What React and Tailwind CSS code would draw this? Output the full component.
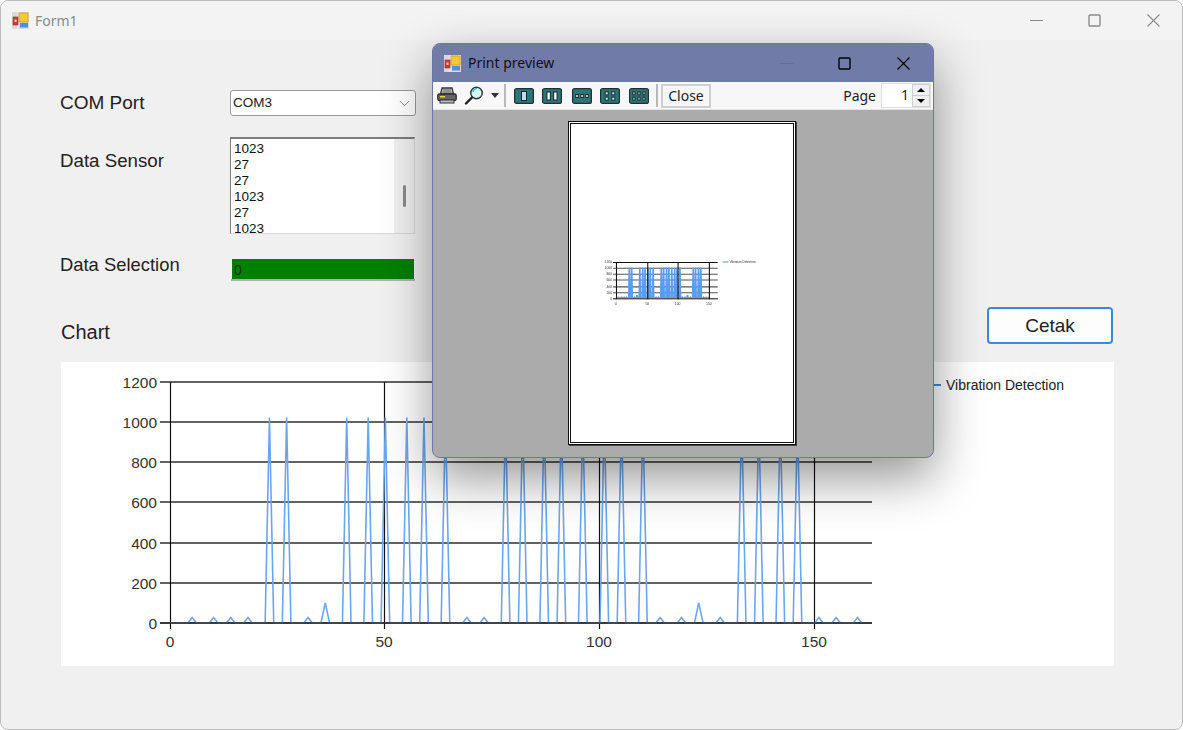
import { ChevronDown } from 'lucide-react';

// spike positions read off the chart
const HIGH = [23, 27, 41, 46, 50, 55, 59, 64, 78, 82, 87, 91, 96, 101, 105, 110, 133, 137, 142, 146];
const LOW = [5, 10, 14, 18, 32, 69, 73, 114, 119, 128, 151, 155, 160];
const MID = [36, 123];

const values = Array.from({ length: 162 }, (_, i) => {
  if (HIGH.includes(i)) return 1023;
  if (LOW.includes(i)) return 27;
  if (MID.includes(i)) return 100;
  return 0;
});

const toPoints = (x0, xStep, y0, yStep) =>
  values.map((v, i) => `${(x0 + i * xStep).toFixed(2)},${(y0 - v * yStep).toFixed(2)}`).join(' ');

function AppIcon({ className }) {
  return (
    <svg viewBox="0 0 17 17" className={className}>
      <rect width="17" height="17" fill="#d9d9d9" />
      <rect x="0" y="5.5" width="17" height="1" fill="#f2f2f2" />
      <rect x="5.5" y="0" width="1" height="17" fill="#f2f2f2" />
      <rect x="7" y="1" width="9" height="9" fill="#f5c838" stroke="#d99a1e" strokeWidth="0.8" />
      <rect x="1" y="5" width="5" height="8" fill="#d8382e" stroke="#9c2a22" strokeWidth="0.6" />
      <rect x="2.5" y="7.5" width="2" height="2.5" fill="#f4d0c8" />
      <rect x="8" y="11" width="8" height="4.5" fill="#4f8fe0" />
    </svg>
  );
}

function CaptionMin({ className }) {
  return (
    <svg viewBox="0 0 13 13" className={`w-[13px] h-[13px] ${className}`}>
      <line x1="0" x2="13" y1="6.5" y2="6.5" stroke="currentColor" strokeWidth="1" />
    </svg>
  );
}

function CaptionMax({ className }) {
  return (
    <svg viewBox="0 0 13 13" className={`w-[13px] h-[13px] ${className}`}>
      <rect x="1" y="1" width="11" height="11" rx="1" fill="none" stroke="currentColor" strokeWidth="1.4" />
    </svg>
  );
}

function CaptionClose({ className }) {
  return (
    <svg viewBox="0 0 13 13" className={`w-[13px] h-[13px] ${className}`}>
      <path d="M0.5 0.5L12.5 12.5M12.5 0.5L0.5 12.5" stroke="currentColor" strokeWidth="1.1" fill="none" />
    </svg>
  );
}

function Printer() {
  return (
    <svg viewBox="0 0 20 17" className="w-5 h-[17px]">
      <path d="M5 1h10l1.5 6h-13z" fill="#cfcfcf" stroke="#333" strokeWidth="1.3" />
      <path d="M6 3h8M5.5 5h9" stroke="#555" strokeWidth="1" />
      <rect x="0.8" y="7" width="18.4" height="6.5" rx="1.5" fill="#666" stroke="#2c2c2c" strokeWidth="1.3" />
      <rect x="3" y="9" width="5" height="1.5" fill="#e8d44a" />
      <rect x="3" y="13" width="14" height="3" fill="#bdbdbd" stroke="#333" strokeWidth="1" />
    </svg>
  );
}

function Magnifier() {
  return (
    <svg viewBox="0 0 20 19" className="w-5 h-[19px]">
      <circle cx="12.5" cy="7" r="5.8" fill="#d4f6fa" stroke="#333" strokeWidth="1.4" />
      <path d="M9 6a4 4 0 0 1 4-3.5" stroke="#35c4d8" strokeWidth="1.6" fill="none" />
      <path d="M8 11.5L2 17.5" stroke="#222" strokeWidth="2.4" strokeLinecap="round" />
    </svg>
  );
}

function PagesIcon({ cols, rows, pageW, pageH, tint = '#f4f4f4' }) {
  const gapX = 20 / (cols + 1);
  const gapY = 16 / (rows + 1);
  const cells = [];
  for (let r = 0; r < rows; r++) {
    for (let c = 0; c < cols; c++) {
      cells.push(
        <rect
          key={`${r}-${c}`}
          x={gapX * (c + 1) - pageW / 2}
          y={gapY * (r + 1) - pageH / 2}
          width={pageW}
          height={pageH}
          fill={tint}
          stroke="#12292a"
          strokeWidth="1"
        />
      );
    }
  }
  return (
    <svg viewBox="0 0 20 16" className="w-5 h-4">
      <rect x="0.6" y="0.6" width="18.8" height="14.8" rx="2" fill="#2f7475" stroke="#1e3031" strokeWidth="1.2" />
      {cells}
    </svg>
  );
}

function FormChart() {
  // viewBox uses screen coordinates so the numbers read like the picture
  const yTicks = [1200, 1000, 800, 600, 400, 200, 0];
  const yPos = [382, 422, 462, 502, 543, 583, 623];
  const xTicks = [0, 50, 100, 150];
  const xPos = [170, 384, 599, 814];
  return (
    <svg viewBox="61 362 1053 304" className="block w-full h-full font-['Liberation_Sans',sans-serif]">
      {yTicks.map((t, i) => (
        <g key={t}>
          <line x1="160" x2="872" y1={yPos[i]} y2={yPos[i]} stroke="#2e2e2e" strokeWidth="1.3" />
          <text x="157" y={yPos[i] + 5.5} textAnchor="end" fontSize="15.5" fill="#333">{t}</text>
        </g>
      ))}
      {xTicks.map((t, i) => (
        <g key={t}>
          <line x1={xPos[i] + 0.5} x2={xPos[i] + 0.5} y1="382" y2="629" stroke="#111" strokeWidth="1.2" />
          <text x={xPos[i]} y="647" textAnchor="middle" fontSize="15.5" fill="#333">{t}</text>
        </g>
      ))}
      <polyline points={toPoints(170.7, 4.293, 623, 0.2008)} fill="none" stroke="#6aa6ee" strokeWidth="1.6" />
      <line x1="160" x2="872" y1="623" y2="623" stroke="#2e2e2e" strokeWidth="1.3" />
      <line x1="925" x2="941" y1="385" y2="385" stroke="#3f86e0" strokeWidth="2" />
      <text x="946" y="390" fontSize="14" fill="#222">Vibration Detection</text>
    </svg>
  );
}

function MiniChart() {
  return (
    <svg viewBox="0 0 227 323" className="block w-full h-full blur-[0.3px] font-['Liberation_Sans',sans-serif]">
      {/* page-local coords: page starts at 569,121 */}
      {[140, 146, 152, 158, 165, 171, 177].map((y, i) => (
        <g key={y}>
          <line x1="43" x2="150" y1={y + 0.5} y2={y + 0.5} stroke={i === 0 ? '#111' : '#555'} strokeWidth="1.1" />
          <text x="42" y={y + 1.5} textAnchor="end" fontSize="3.5" fill="#333">{1200 - i * 200}</text>
        </g>
      ))}
      <polyline points={toPoints(46, 0.594, 177, 0.0306)} fill="none" stroke="#5a9cf0" strokeWidth="1.7" />
      <line x1="43" x2="150" y1="177.5" y2="177.5" stroke="#555" strokeWidth="1.1" />
      {[46, 78, 109, 141].map((x, i) => (
        <g key={x}>
          <line x1={x + 0.5} x2={x + 0.5} y1="140" y2="178" stroke="#111" strokeWidth="1.1" />
          <text x={x} y="184" textAnchor="middle" fontSize="3.5" fill="#333">{i * 50}</text>
        </g>
      ))}
      <line x1="155" x2="161" y1="140" y2="140" stroke="#4a93ec" strokeWidth="1" />
      <text x="162" y="141.2" fontSize="3.2" fill="#333">Vibration Detection</text>
    </svg>
  );
}

function PrintPreview() {
  return (
    <div className="absolute left-[432px] top-[43px] w-[502px] h-[415px] flex flex-col rounded-lg overflow-hidden border border-[#6c77a6] bg-[#ababab] font-['Noto_Sans',sans-serif] shadow-[0_20px_50px_rgba(0,0,0,0.42)]">
      <div className="h-[38px] bg-[#717ba8] flex items-center pl-[11px] shrink-0">
        <AppIcon className="w-[17px] h-[17px]" />
        <span className="ml-[7px] text-sm text-[#111]">Print preview</span>
        <CaptionMin className="ml-auto text-[#636d98]" />
        <CaptionMax className="ml-[45px] text-black" />
        <CaptionClose className="ml-[46px] mr-[23px] text-black" />
      </div>
      <div className="h-[28px] bg-[#f7f7f7] flex items-center pl-[4px] pr-[2px] shrink-0 border-b border-[#e4e4e4]">
        <Printer />
        <span className="ml-[7px]"><Magnifier /></span>
        <span className="ml-[7px] w-0 h-0 border-x-4 border-x-transparent border-t-[5px] border-t-[#333]"></span>
        <span className="ml-[5px] w-0.5 h-[23px] bg-[#b8b8b8]"></span>
        <span className="ml-[8px]"><PagesIcon cols={1} rows={1} pageW={5} pageH={9} tint="#c9d6f2" /></span>
        <span className="ml-[8px]"><PagesIcon cols={2} rows={1} pageW={3.5} pageH={8} /></span>
        <span className="ml-[10px]"><PagesIcon cols={3} rows={1} pageW={2.5} pageH={3} /></span>
        <span className="ml-[8px]"><PagesIcon cols={2} rows={2} pageW={3} pageH={3} /></span>
        <span className="ml-[9px]"><PagesIcon cols={3} rows={2} pageW={2} pageH={3} /></span>
        <span className="ml-[7px] w-0.5 h-[23px] bg-[#b8b8b8]"></span>
        <button className="ml-[3px] w-[50px] h-[24px] border-2 border-[#cfcfcf] bg-[#f7f7f7] text-sm leading-none text-[#222]">Close</button>
        <span className="ml-auto text-sm text-[#222]">Page</span>
        <div className="ml-[5px] w-[50px] h-[25px] flex border border-[#e0e0e0] bg-white">
          <span className="flex-1 text-right pr-[3px] text-sm leading-[22px] text-[#222]">1</span>
          <div className="w-[18px] flex flex-col gap-px bg-[#cfcfcf] p-px">
            <div className="flex-1 bg-[#f0f0f0] flex items-center justify-center">
              <span className="w-0 h-0 border-x-4 border-x-transparent border-b-4 border-b-black"></span>
            </div>
            <div className="flex-1 bg-[#f0f0f0] flex items-center justify-center">
              <span className="w-0 h-0 border-x-4 border-x-transparent border-t-4 border-t-black"></span>
            </div>
          </div>
        </div>
      </div>
      <div className="flex-1 flex justify-center pt-[11px] pr-[3px]">
        <div className="w-[228px] h-[324px] border border-[#111] bg-white p-px shadow-[1px_1px_0_#444]">
          <div className="w-full h-full border border-[#111] bg-white">
            <MiniChart />
          </div>
        </div>
      </div>
    </div>
  );
}

export default function App() {
  const sensorData = ['1023', '27', '27', '1023', '27', '1023'];

  return (
    <div className="relative w-[1183px] h-[730px] overflow-hidden bg-white font-['Liberation_Sans',sans-serif]">
      <div className="h-full flex flex-col rounded-lg border border-[#bcbcbc] bg-[#f0f0f0] overflow-hidden">
        {/* title bar */}
        <div className="h-[39px] bg-[#f3f3f3] flex items-center pl-[11px] shrink-0 font-['Noto_Sans',sans-serif]">
          <AppIcon className="w-[17px] h-[17px]" />
          <span className="ml-[6px] text-sm text-[#8a8a8a]">Form1</span>
          <CaptionMin className="ml-auto text-[#8a8a8a]" />
          <CaptionMax className="ml-[45px] text-[#8a8a8a]" />
          <CaptionClose className="ml-[46px] mr-[22px] text-[#8a8a8a]" />
        </div>

        <div className="pl-[59px] text-[19px] leading-6 text-[#222]">
          <div className="mt-[50px] h-[26px] flex items-center">
            <span className="w-[170px]">COM Port</span>
            <div className="w-[186px] h-[26px] flex items-center justify-between rounded-[3px] border border-[#999] bg-white pl-[2px] pr-[2px] text-[13.5px]">
              <span>COM3</span>
              <ChevronDown className="w-[17px] h-[17px] text-[#777]" strokeWidth={1.3} />
            </div>
          </div>

          <div className="mt-[21px] h-[97px] flex items-start">
            <span className="w-[170px] mt-3 text-[18.7px]">Data Sensor</span>
            <div className="w-[185px] h-[97px] flex border-t-2 border-l border-[#7c7c7c] border-r border-b border-r-[#d8d8d8] border-b-[#d8d8d8] bg-white overflow-hidden">
              <div className="flex-1 pl-[3px] pt-[2px] text-[13.5px] leading-4 text-[#111]">
                {sensorData.map((d, i) => <div key={i}>{d}</div>)}
              </div>
              <div className="w-[20px] bg-[#f0f0f0] pt-[46px] pl-[9px]">
                <div className="w-[3px] h-[22px] rounded-full bg-[#8a8a8a]"></div>
              </div>
            </div>
          </div>

          <div className="mt-[19px] h-[28px] flex items-start">
            <span className="w-[170px] text-[18.4px]">Data Selection</span>
            <div className="w-[184px] h-[23px] mt-[5px] ml-[1px] px-px pt-px border-b-2 border-[#b0b0b0]">
              <div className="h-5 bg-[#008000] pl-[2px] text-sm leading-[22px] text-[#053005]">0</div>
            </div>
          </div>

          <div className="mt-[26px] h-[37px] flex justify-between items-start pr-[69px]">
            <span className="ml-[1px] mt-[11px] text-xl leading-7">Chart</span>
            <button className="w-[126px] h-[37px] rounded border-2 border-[#3a8ad4] bg-[#fdfdfd] text-[19px] text-[#222]">Cetak</button>
          </div>

          <div className="mt-[18px] ml-[1px] w-[1053px] h-[304px] bg-white">
            <FormChart />
          </div>
        </div>
      </div>
      <PrintPreview />
    </div>
  );
}
